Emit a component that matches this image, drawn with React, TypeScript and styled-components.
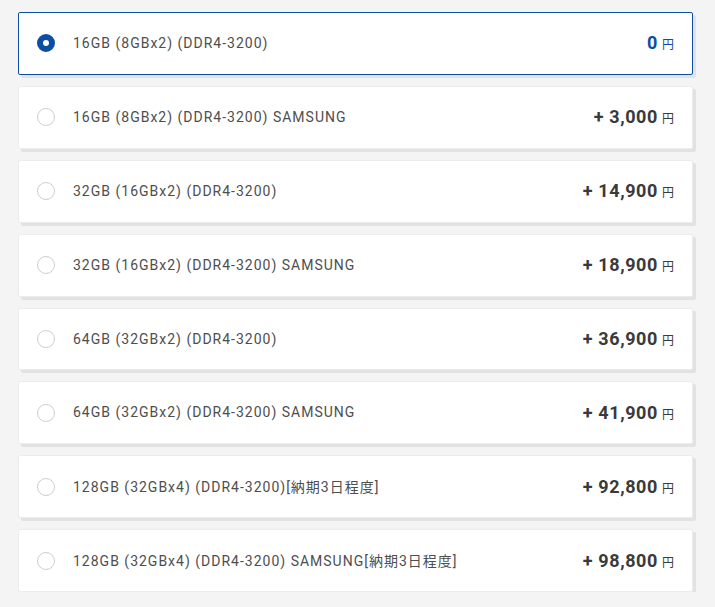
import React, { useState } from "react";
import styled, { createGlobalStyle } from "styled-components";

const GlobalStyle = createGlobalStyle`
  body {
    margin: 0;
    background: #f4f4f4;
    font-family: Roboto, "Noto Sans CJK JP", sans-serif;
  }
`;

interface MemoryOption {
  label: string;
  price: number;
}

const options: MemoryOption[] = [
  { label: "16GB (8GBx2) (DDR4-3200)", price: 0 },
  { label: "16GB (8GBx2) (DDR4-3200) SAMSUNG", price: 3000 },
  { label: "32GB (16GBx2) (DDR4-3200)", price: 14900 },
  { label: "32GB (16GBx2) (DDR4-3200) SAMSUNG", price: 18900 },
  { label: "64GB (32GBx2) (DDR4-3200)", price: 36900 },
  { label: "64GB (32GBx2) (DDR4-3200) SAMSUNG", price: 41900 },
  { label: "128GB (32GBx4) (DDR4-3200)[納期3日程度]", price: 92800 },
  { label: "128GB (32GBx4) (DDR4-3200) SAMSUNG[納期3日程度]", price: 98800 },
];

const App = () => {
  const [selected, setSelected] = useState(0);
  return (
    <>
      <GlobalStyle />
      <Wrapper>
        {options.map((o, i) => (
          <OptionCard
            key={o.label}
            active={selected === i}
            onClick={() => setSelected(i)}
          >
            <Radio active={selected === i} />
            <Label>{o.label}</Label>
            <Price active={selected === i}>
              {o.price === 0 ? "0" : `+ ${o.price.toLocaleString("en-US")}`}
              <Yen>円</Yen>
            </Price>
          </OptionCard>
        ))}
      </Wrapper>
    </>
  );
};

const Wrapper = styled.div`
  display: flex;
  flex-direction: column;
  gap: 11px;
  width: 675px;
  padding: 12px 0 0 18px;
`;

const OptionCard = styled.div<{ active: boolean }>`
  display: flex;
  align-items: center;
  height: 62.9px;
  box-sizing: border-box;
  padding: 0 18px;
  background: #fff;
  border: 1px solid ${(props) => (props.active ? "#0d4ea1" : "#ececec")};
  border-radius: 2px;
  box-shadow: 3px 3px 0 #e2e2e2;
  cursor: pointer;
`;

const Radio = styled.span<{ active: boolean }>`
  width: 18px;
  height: 18px;
  box-sizing: border-box;
  border-radius: 50%;
  flex-shrink: 0;
  border: ${(props) =>
    props.active ? "6px solid #0d4ea1" : "1px solid #cfcfcf"};
  background: #fff;
  margin-right: 18px;
`;

const Label = styled.span`
  flex: 1;
  font-size: 14px;
  letter-spacing: 1px;
  color: #4e4e4e;
  margin-top: -1px;
`;

const Price = styled.span<{ active: boolean }>`
  font-size: 18px;
  font-weight: 700;
  letter-spacing: 0.6px;
  color: ${(props) => (props.active ? "#0d4ea1" : "#3a3a3a")};
  display: flex;
  align-items: baseline;
  margin-top: -1px;
`;

const Yen = styled.span`
  font-size: 12px;
  font-weight: 400;
  margin-left: 4px;
  letter-spacing: 0;
`;

export default App;
